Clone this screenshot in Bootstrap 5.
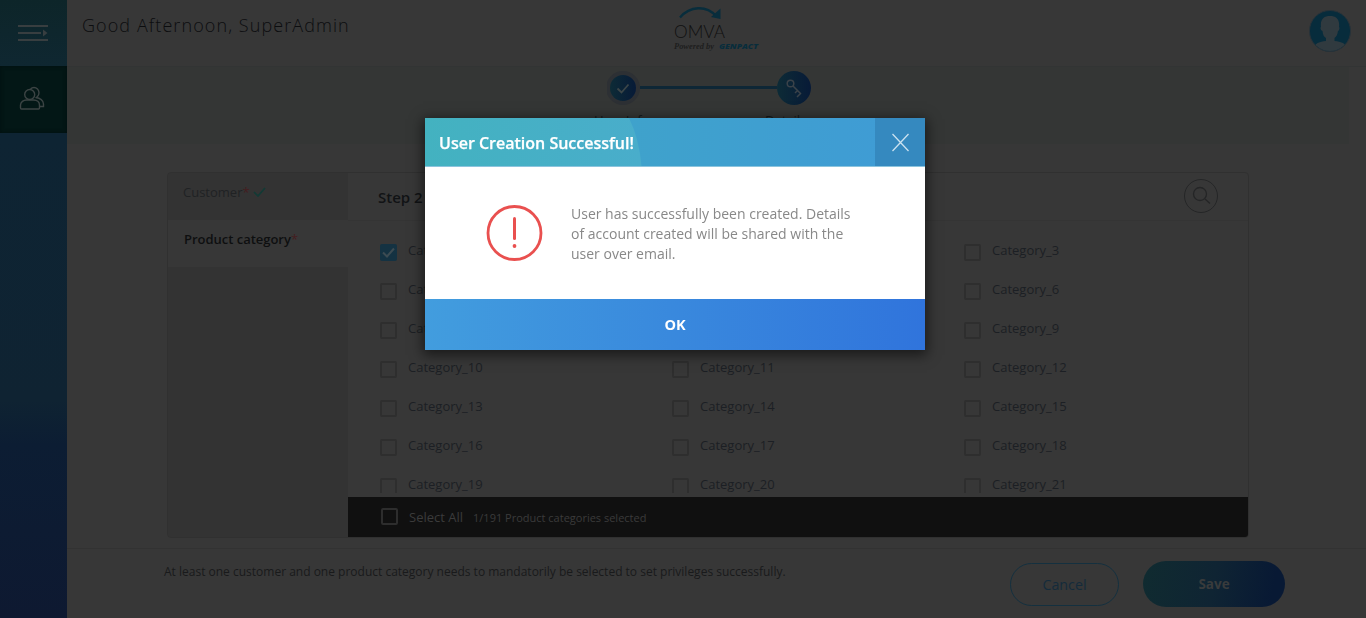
<!DOCTYPE html>
<html lang="en">
<head>
<meta charset="utf-8">
<meta name="viewport" content="width=device-width, initial-scale=1">
<title>OMVA - User creation</title>
<link rel="stylesheet" href="https://cdn.jsdelivr.net/npm/bootstrap@5.3.0/dist/css/bootstrap.min.css">
<style>
body{font-family:"Open Sans","Noto Sans",sans-serif;font-size:13px;line-height:20px;background:#373737;color:#1c1f24;height:618px;overflow:hidden}
.side{width:67px;background:linear-gradient(180deg,#0f2a2f 0,#0f2631 66px,#0e2433 135px,#0f2332 400px,#0c1d33 445px,#0e1931 618px)}
.side-menu{height:66px;background:linear-gradient(180deg,#0d2529,#0f2731)}
.side-users{height:67px;background:#031716;box-shadow:inset 0 0 4px #020f0f}
.topbar{height:67px;border-bottom:1px solid #323434;padding:0 15px}
.hello{font-size:18px;font-weight:300;letter-spacing:1.08px;color:#0c0d0f;line-height:26px;margin-top:12px}
.band{height:77px;width:1282px;background:#343635}
.steps{padding:4px 0 0 540px}
.step-line{width:137px;height:3px;margin-top:-1px;background:#0e2736}
.step-names{font-size:13px;color:#15191a;line-height:18px;padding:6px 0 0 527px}
.step-first{width:171px}
.panel{width:1082px;height:366px;margin:28px 0 0 100px;border:1px solid #303030;border-radius:4px;overflow:hidden}
.tabs-col{width:180px;background:#333}
.tab-a{height:47px;padding:9px 15px;color:#202224}
.tab-b{height:47px;padding:9px 16px;color:#0e0f10;background:#373737;font-weight:600;letter-spacing:-.02px}
.req{color:#451d1f;font-weight:400}
.done-mark{margin-top:-4px}
.step-title{height:48px;border-bottom:1px solid #343434;padding:0 30px;font-size:15px;font-weight:600;color:#111315}
.find{width:34px;height:34px;border:1px solid #252627;border-radius:50%;margin-top:-2px}
.cats{display:grid;grid-template-columns:292px 292px 1fr;grid-auto-rows:39px;height:272px;overflow:hidden;padding:20px 0 0 32px}
.cat-name{margin:-1px 0 0 11px}
.tick{width:17px;height:17px;border:2px solid #2e2e2e;border-radius:2px;margin-top:3px}
.tick.on{background:#143242;border:0}
.all-bar{height:40px;background:#101010;color:#3b3b3b;padding-left:33px;margin-top:4px}
.all-bar .tick{margin:-1px 0 0;border-color:#2d2d2d}
.all-label{margin-left:11px}
.all-count{margin:1px 0 0 10px;font-size:11px}
.foot{border-top:1px solid #323232;margin-top:10px;height:69px;padding:12px 81px 0 97px;font-size:12px;color:#191a1b}
.foot-note{margin-top:1px}
.btn-cancel{width:109px;height:43px;border:1px solid #14303f;border-radius:22px;color:#142b3b;font-size:14.300px;margin-top:2px;padding:1px 0 0}
.btn-save{width:142px;height:46px;border:0;border-radius:23px;color:#393b3c;font-weight:700;font-size:13.500px;background:linear-gradient(100deg,#102b30,#0f2433 50%,#081934 90%);padding:0}
.notice{position:fixed;left:425px;top:118px;width:500px;height:232px;background:#fff;box-shadow:0 3px 12px 2px rgba(0,0,0,.55)}
.notice-head{height:49px;background:linear-gradient(90deg,#3fa7c4,#3f9bd6);color:#fff;font-size:16px;font-weight:600;border-bottom:1px solid #8cc4dd}
.notice-name{padding:1px 0 0 14px;-webkit-text-stroke:.25px #fff}
.notice-sweep{width:217px;height:48px}
.notice-close{width:50px;height:48px;background:#3589bf}
.notice-body{height:132px;padding-left:60px;font-size:14px;line-height:20px;color:#888}
.notice-text{padding:2px 0 0 27px}
.notice-ok{height:51px;border:0;border-radius:0;background:linear-gradient(90deg,#429dde,#3074dc);color:#fff;font-size:14.500px;font-weight:700}
</style>
</head>
<body>
<div class="d-flex h-100">
  <aside class="side flex-shrink-0">
    <div class="side-menu"><svg class="d-block" width="67" height="66" fill="none" stroke="#383e40" stroke-width="2"><path d="M18 26h30M18 33h23M18 40h30"/><path d="M43 29.500l4.500 3.500-4.500 3.500z" fill="#383e40" stroke="none"/></svg></div>
    <div class="side-users"><svg class="d-block" width="67" height="67" fill="none" stroke="#3c4444" stroke-width="1.400"><circle cx="29.700" cy="28.500" r="5"/><path d="M20.500 42v-3c0-3 3-5 6-5h7c3.500 0 6 2 6 5v3c0 .6-.4 1-1 1h-17c-.6 0-1-.4-1-1z"/><path d="M30.500 23c2-2 5-2 7 0s2 5.500 0 7.500l-2 1.500M36 31.500c4 .5 7.500 3 7.500 6.500v2.500H40"/></svg></div>
  </aside>
  <main class="flex-grow-1">
    <header class="topbar d-flex justify-content-between">
      <div class="hello">Good Afternoon, SuperAdmin</div>
      <svg class="position-absolute" style="left:670px;top:4px" width="94" height="50"><path d="M10 13.500C20 2 36 1 46 12" fill="none" stroke="#082d3c" stroke-width="2.400"/><path d="M41 13L50.500 4.500V15z" fill="#082d3c"/><text x="4" y="34" font-family="Lato" font-size="17" font-weight="300" fill="#101010" textLength="51" lengthAdjust="spacingAndGlyphs">OMVA</text><text x="4" y="45" font-family="Liberation Serif" font-size="8" font-style="italic" font-weight="700" fill="#1e1e1e" textLength="40" lengthAdjust="spacingAndGlyphs">Powered by</text><text x="49" y="44.500" font-family="Open Sans" font-size="7.500" font-weight="800" font-style="italic" fill="#082d3c" textLength="39" lengthAdjust="spacingAndGlyphs">GENPACT</text></svg>
      <svg width="42" height="42" style="margin-top:10px"><defs><clipPath id="face"><circle cx="21" cy="21" r="20"/></clipPath></defs><circle cx="21" cy="21" r="20.500" fill="#072c3c" stroke="#273239"/><g clip-path="url(#face)" fill="#303a3f"><path d="M12 17c-1-8 3-11 9-11s10 3 9 11c1 1 0 4-1 4-.6 4-2 6-3.500 7v3c3 0 8 1 11 4l-3 7H9l-3-7c3-3 8-4 11-4v-3c-2-1-3-3-3.500-7-1 0-3-3-1.500-4z"/></g></svg>
    </header>
    <section class="band overflow-hidden">
      <div class="steps d-flex align-items-center">
        <svg width="33" height="34"><defs><linearGradient id="dot"><stop stop-color="#0d2b36"/><stop offset="1" stop-color="#071a37"/></linearGradient></defs><circle cx="16" cy="17" r="17" fill="#2d3034"/><circle cx="16" cy="17" r="13" fill="url(#dot)"/><path d="M10.500 17.500l4 4 7-8" fill="none" stroke="#3c4648" stroke-width="1.800"/></svg>
        <div class="step-line"></div>
        <svg width="34" height="34"><circle cx="17" cy="17" r="17" fill="url(#dot)"/><g fill="none" stroke="#3a4249" stroke-width="1.500"><circle cx="13.500" cy="12.500" r="3.300"/><path d="M16 15l7.500 7.500-3.500 3.500M20.500 19.500l-2.500 2.500"/></g></svg>
      </div>
      <div class="step-names d-flex"><span class="step-first">User Info</span><span>Details</span></div>
    </section>
    <section class="panel d-flex">
      <div class="tabs-col flex-shrink-0">
        <div class="tab-a">Customer<span class="req">*</span> <svg class="done-mark" width="13" height="10"><path d="M1 5l4 4 7-8" fill="none" stroke="#123a35" stroke-width="1.700"/></svg></div>
        <div class="tab-b">Product category<span class="req">*</span></div>
      </div>
      <div class="flex-grow-1">
        <div class="step-title d-flex align-items-center justify-content-between"><span>Step 2</span><svg class="find" viewBox="0 0 32 32" fill="none" stroke="#242526" stroke-width="1.300"><circle cx="15" cy="14" r="6.500"/><path d="M20 19l5 4.500"/></svg></div>
        <div class="cats" id="cats"></div>
        <div class="all-bar d-flex align-items-center"><span class="tick"></span><span class="all-label">Select All</span><small class="all-count">1/191 Product categories selected</small></div>
      </div>
    </section>
    <footer class="foot d-flex align-items-start"><span class="foot-note me-auto">At least one customer and one product category needs to mandatorily be selected to set privileges successfully.</span><button class="btn btn-cancel">Cancel</button><button class="btn btn-save ms-4">Save</button></footer>
  </main>
</div>
<div class="notice" role="dialog" aria-label="User Creation Successful">
  <div class="notice-head d-flex justify-content-between position-relative">
    <svg class="notice-sweep position-absolute start-0 top-0"><defs><linearGradient id="sw"><stop stop-color="#43b2c0"/><stop offset="1" stop-color="#49adcb"/></linearGradient></defs><path d="M0 0h204q10 20 12.500 48H0z" fill="url(#sw)"/></svg>
    <span class="position-relative align-self-center notice-name">User Creation Successful!</span>
    <span class="notice-close"><svg width="50" height="48" fill="none" stroke="#cbe2f0" stroke-width="1.300"><path d="M17.500 16l16 17M33.500 16l-16 17"/></svg></span>
  </div>
  <div class="notice-body d-flex align-items-center"><svg width="59" height="58" class="flex-shrink-0" fill="none" stroke="#e9504f" stroke-linecap="round"><circle cx="29.500" cy="29" r="26.500" stroke-width="2.800"/><path d="M29.500 14.500v20" stroke-width="3"/><circle cx="29.500" cy="42" r="1.900" fill="#e9504f" stroke="none"/></svg><div class="notice-text">User has successfully been created. Details<br>of account created will be shared with the<br>user over email.</div></div>
  <button class="btn notice-ok w-100 d-block p-0">OK</button>
</div>
<script>
// Items 2, 5 and 8 sit behind the dialog, so their cells stay empty.
const covered = [2, 5, 8];
document.getElementById('cats').innerHTML = Array.from({length: 21}, (_, i) => covered.includes(i + 1) ? '<div></div>' :
  `<div class="d-flex align-items-start"><span class="tick${i ? '' : ' on'}">${i ? '' : '<svg class="d-block" width="17" height="17"><path d="M3 8.500l4 4 7-8" fill="none" stroke="#3c4b52" stroke-width="2"/></svg>'}</span><span class="cat-name">Category_${i + 1}</span></div>`).join('');
</script>
<script src="https://cdn.jsdelivr.net/npm/bootstrap@5.3.0/dist/js/bootstrap.bundle.min.js"></script>
</body>
</html>
